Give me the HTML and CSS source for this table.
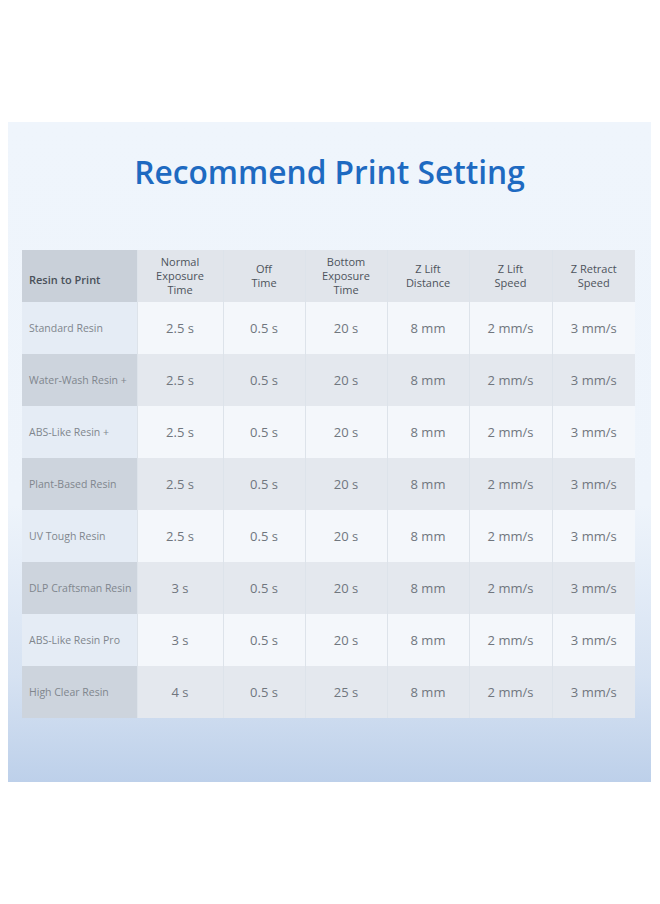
FILE: index.html
```html
<!DOCTYPE html>
<html>
<head>
<meta charset="utf-8">
<link rel="stylesheet" href="styles.css">
</head>
<body>
<div class="panel">
  <h1 class="title">Recommend Print Setting</h1>
  <table class="settings">
    <colgroup>
      <col class="c-name"><col class="c1"><col class="c2"><col class="c3"><col class="c4"><col class="c5"><col class="c6">
    </colgroup>
    <thead>
      <tr>
        <th class="name">Resin to Print</th>
        <th>Normal<br>Exposure<br>Time</th>
        <th>Off<br>Time</th>
        <th>Bottom<br>Exposure<br>Time</th>
        <th>Z Lift<br>Distance</th>
        <th>Z Lift<br>Speed</th>
        <th>Z Retract<br>Speed</th>
      </tr>
    </thead>
    <tbody>
      <tr class="light"><td class="name">Standard Resin</td><td>2.5 s</td><td>0.5 s</td><td>20 s</td><td>8 mm</td><td>2 mm/s</td><td>3 mm/s</td></tr>
      <tr class="dark"><td class="name">Water-Wash Resin +</td><td>2.5 s</td><td>0.5 s</td><td>20 s</td><td>8 mm</td><td>2 mm/s</td><td>3 mm/s</td></tr>
      <tr class="light"><td class="name">ABS-Like Resin +</td><td>2.5 s</td><td>0.5 s</td><td>20 s</td><td>8 mm</td><td>2 mm/s</td><td>3 mm/s</td></tr>
      <tr class="dark"><td class="name">Plant-Based Resin</td><td>2.5 s</td><td>0.5 s</td><td>20 s</td><td>8 mm</td><td>2 mm/s</td><td>3 mm/s</td></tr>
      <tr class="light"><td class="name">UV Tough Resin</td><td>2.5 s</td><td>0.5 s</td><td>20 s</td><td>8 mm</td><td>2 mm/s</td><td>3 mm/s</td></tr>
      <tr class="dark"><td class="name">DLP Craftsman Resin</td><td>3 s</td><td>0.5 s</td><td>20 s</td><td>8 mm</td><td>2 mm/s</td><td>3 mm/s</td></tr>
      <tr class="light"><td class="name">ABS-Like Resin Pro</td><td>3 s</td><td>0.5 s</td><td>20 s</td><td>8 mm</td><td>2 mm/s</td><td>3 mm/s</td></tr>
      <tr class="dark"><td class="name">High Clear Resin</td><td>4 s</td><td>0.5 s</td><td>25 s</td><td>8 mm</td><td>2 mm/s</td><td>3 mm/s</td></tr>
    </tbody>
  </table>
</div>
</body>
</html>
```
FILE: styles.css
```css
html, body {
  margin: 0;
  padding: 0;
  background: #ffffff;
}
body {
  font-family: "Open Sans", "Noto Sans", sans-serif;
  width: 660px;
  height: 904px;
}
.panel {
  box-sizing: border-box;
  margin: 122px 0 0 8px;
  width: 643px;
  height: 660px;
  padding: 30px 0 0 14px;
  background: linear-gradient(180deg, #eff5fc 0%, #eef4fb 58%, #d6e2f2 84%, #bdd0ea 100%);
}
.title {
  margin: 0 14px 0 0;
  text-align: center;
  font-size: 31.7px;
  line-height: 40px;
  font-weight: 600;
  color: #1e6ac1;
  letter-spacing: 0;
}
.settings {
  margin-top: 58px;
  border-collapse: collapse;
  table-layout: fixed;
  width: 613px;
}
.c-name { width: 115px; }
.c1 { width: 86px; }
.c2 { width: 82px; }
.c3 { width: 82px; }
.c4 { width: 82px; }
.c5 { width: 83px; }
.c6 { width: 83px; }
.settings th,
.settings td {
  height: 52px;
  padding: 0;
  text-align: center;
  vertical-align: middle;
  border-left: 1px solid #dde3ea;
}
.settings th {
  background: #e1e5eb;
  color: #4d535b;
  font-size: 11px;
  font-weight: 500;
  line-height: 14px;
}
.settings th.name {
  height: 45px;
  background: #c9d0d9;
  text-align: left;
  padding: 7px 0 0 7px;
  font-size: 11px;
  font-weight: 600;
  color: #4a5059;
  border-left: none;
}
.settings td {
  color: #70767e;
  font-size: 13px;
}
.settings td.name {
  text-align: left;
  padding-left: 7px;
  font-size: 10.5px;
  color: #80868d;
  border-left: none;
  white-space: nowrap;
}
.light td { background: #f4f7fb; }
.light td.name { background: #e5ecf5; }
.dark td { background: #e4e8ee; }
.dark td.name { background: #cdd4dd; }
```
